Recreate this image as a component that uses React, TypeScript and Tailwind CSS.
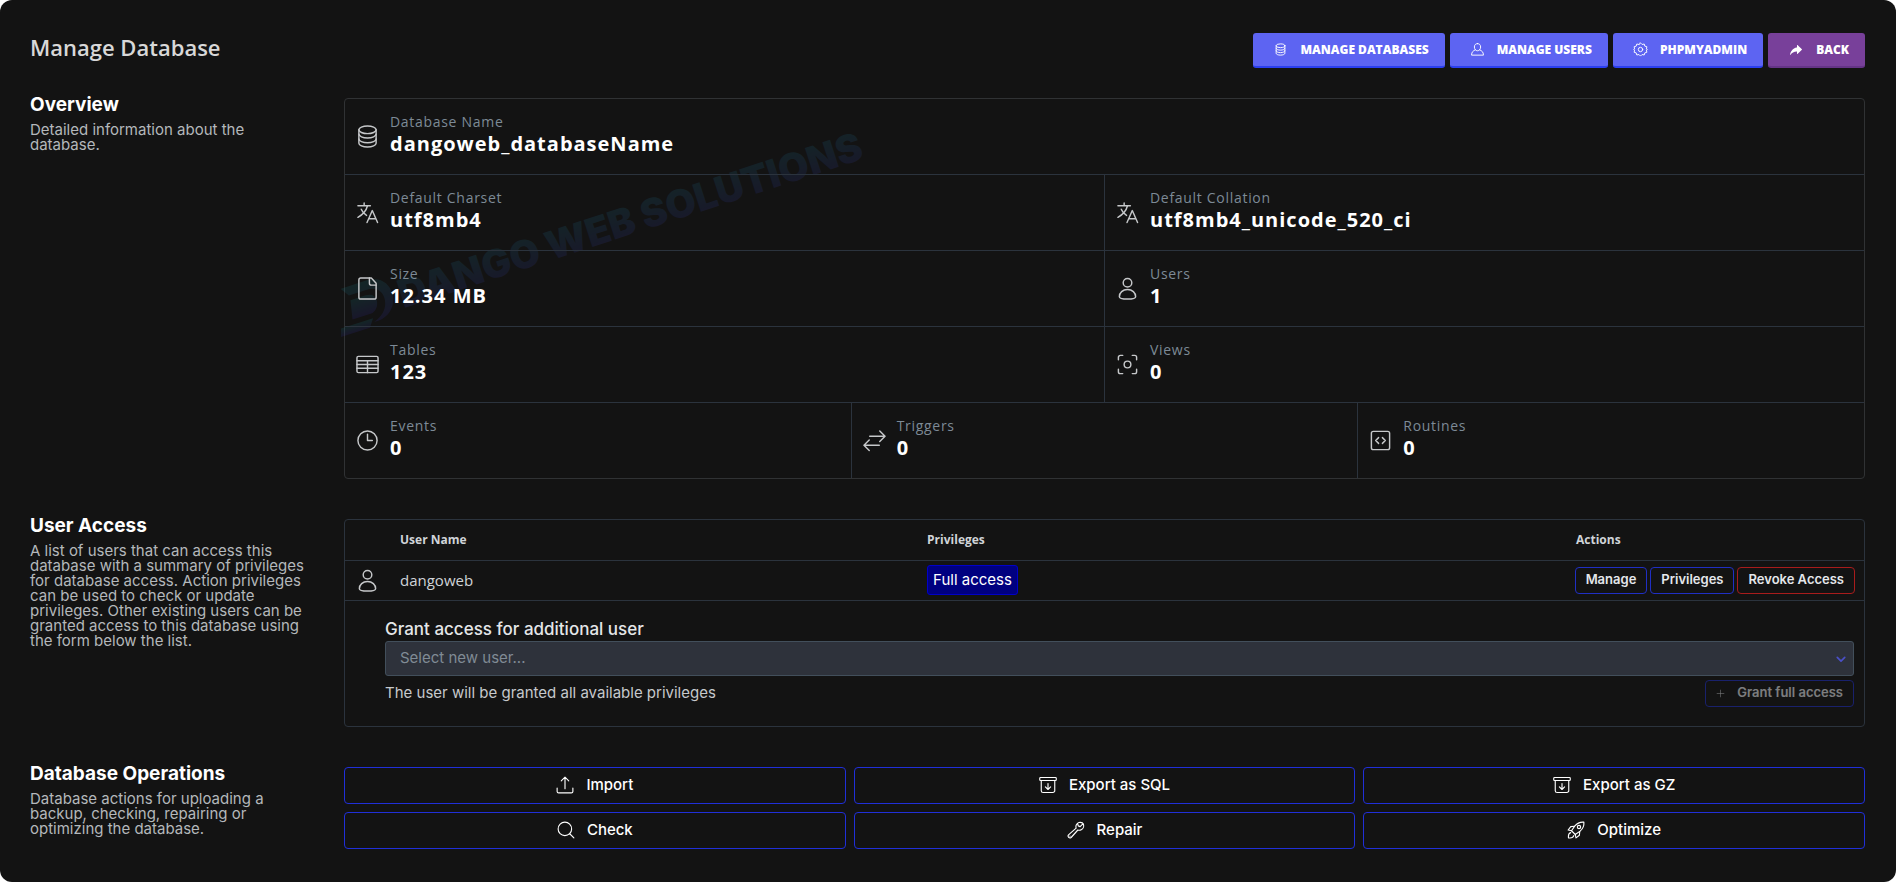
import type { ReactNode } from "react";
import { IoIosShareAlt } from "react-icons/io";

type IconProps = { children: ReactNode; className?: string };

function Icon({ children, className = "size-6" }: IconProps) {
  return (
    <svg
      viewBox="0 0 24 24"
      fill="none"
      stroke="currentColor"
      strokeWidth="1.5"
      strokeLinecap="round"
      strokeLinejoin="round"
      className={`shrink-0 ${className}`}
      aria-hidden="true"
    >
      {children}
    </svg>
  );
}

const icons = {
  database: (
    <>
      <ellipse cx="12" cy="5" rx="9" ry="4" />
      <path d="M3 5v14c0 2.2 4 4 9 4s9-1.8 9-4V5" />
      <path d="M3 9.500c0 2.200 4 4 9 4s9-1.800 9-4" />
      <path d="M3 14.500c0 2.200 4 4 9 4s9-1.800 9-4" />
    </>
  ),
  databaseSmall: (
    <>
      <ellipse cx="12" cy="6" rx="7" ry="3" />
      <path d="M5 6v12c0 1.700 3 3 7 3s7-1.300 7-3V6" />
      <path d="M5 10c0 1.700 3 3 7 3s7-1.300 7-3" />
      <path d="M5 14c0 1.700 3 3 7 3s7-1.300 7-3" />
    </>
  ),
  translate: (
    <>
      <path d="M2 5h13M8.500 2v3M12 5c-1 4-4.500 9-10 12M5.500 8.500c1 2.500 3 5 5.500 6.500" />
      <path d="M11.500 22.500 17 10l5.500 12.500M13.500 18.500h7" />
    </>
  ),
  file: (
    <>
      <path d="M5 1h11l5 5.500V21a2 2 0 0 1-2 2H5a2 2 0 0 1-2-2V3a2 2 0 0 1 2-2Z" />
      <path d="M14 1v5.500a2 2 0 0 0 2 2h5" />
    </>
  ),
  user: (
    <>
      <circle cx="12" cy="6" r="4.500" />
      <path d="M12 13c-5 0-8.500 3.500-8.500 7.500 0 1.500 4 2.500 8.500 2.500s8.500-1 8.500-2.500C20.500 16.500 17 13 12 13Z" />
    </>
  ),
  userSmall: (
    <>
      <path d="M12 2.500c-3 0-5 2.200-5 5.500s2 6 5 6 5-2.700 5-6-2-5.500-5-5.500Z" />
      <path d="M8.500 12.500C5 14 2.500 16 2.500 21h19c0-5-2.500-7-6-8.500" />
    </>
  ),
  table: (
    <>
      <rect x="1" y="3.500" width="22" height="17" rx="1.500" />
      <path d="M1 8h22M1 12h22M1 16h22M12 8v12.500" />
    </>
  ),
  views: (
    <>
      <circle cx="12" cy="12" r="3.500" />
      <path d="M2.500 7V4.500a2 2 0 0 1 2-2H7M17 2.500h2.500a2 2 0 0 1 2 2V7M21.500 17v2.500a2 2 0 0 1-2 2H17M7 21.500H4.500a2 2 0 0 1-2-2V17" />
    </>
  ),
  clock: (
    <>
      <circle cx="12" cy="12" r="10" />
      <path d="M12 5.500V12h5" />
    </>
  ),
  triggers: <path d="M7 7.500h15.500M17.500 2l5.500 5.500-5.500 5.500M17 17H1.500M6.500 11.500 1 17l5.500 5.500" />,
  routines: (
    <>
      <rect x="2.500" y="2.500" width="19" height="19" rx="2" />
      <path d="m10 9-3 3 3 3M14 9l3 3-3 3" />
    </>
  ),
  gear: (
    <>
      <circle cx="12" cy="12" r="3.500" />
      <path d="M12 1.500 14.500 4l3.400-.8 1 3.400 3.300 1-.8 3.400L23 12l-1.600 1 .8 3.400-3.300 1-1 3.400-3.400-.8-2.500 2.500L9.500 20l-3.400.8-1-3.400-3.300-1 .8-3.400L1 12l1.600-1-.8-3.400 3.300-1 1-3.400 3.400.8Z" />
    </>
  ),
  upload: <path d="M12 17V1.500M7 6.500l5-5 5 5M1.500 16v4.500a2 2 0 0 0 2 2h17a2 2 0 0 0 2-2V16" />,
  archive: (
    <>
      <rect x="1" y="2" width="22" height="4" rx="1" />
      <path d="M3 6v13.500a2.500 2.500 0 0 0 2.500 2.500h13a2.500 2.500 0 0 0 2.500-2.500V6M12 10v8M8.500 14.500 12 18l3.500-3.500" />
    </>
  ),
  search: (
    <>
      <circle cx="10.500" cy="10.500" r="9" />
      <path d="m17 17 5.500 5.500" />
    </>
  ),
  wrench: (
    <>
      <path d="M20.500 2.500c-3-1.500-6.500-.5-8 2.500-.8 1.600-.8 3-.3 4.500L2 18.500a2.500 2.500 0 0 0 3.500 3.500l9-10c1.500.5 3 .5 4.500-.3 3-1.500 4-5.200 2.500-8.200L17.500 7.500 15 6.500l-.5-2" />
      <path d="M4 20.200v.1" />
    </>
  ),
  rocket: (
    <>
      <path d="M22.500 1.500c-5-.5-9 1.500-12 5L6 13l5 5 6.500-4.500c3.500-3 5.500-7 5-12Z" />
      <circle cx="16" cy="8" r="2.200" />
      <path d="M10 7 5 7.500 1.500 12l4.500 1M17 14l-.5 5-4.500 3.500-1-4.500M5 15.500c-2 .5-3.500 3-3 7 4 .5 6.500-1 7-3" />
    </>
  ),
  plus: <path d="M12 3v18M3 12h18" />,
  chevron: <path d="m3 8 9 9 9-9" />,
};

type Stat = { label: string; value: string; icon: ReactNode };

const statRows: Stat[][] = [
  [{ label: "Database Name", value: "dangoweb_databaseName", icon: icons.database }],
  [
    { label: "Default Charset", value: "utf8mb4", icon: icons.translate },
    { label: "Default Collation", value: "utf8mb4_unicode_520_ci", icon: icons.translate },
  ],
  [
    { label: "Size", value: "12.34 MB", icon: icons.file },
    { label: "Users", value: "1", icon: icons.user },
  ],
  [
    { label: "Tables", value: "123", icon: icons.table },
    { label: "Views", value: "0", icon: icons.views },
  ],
  [
    { label: "Events", value: "0", icon: icons.clock },
    { label: "Triggers", value: "0", icon: icons.triggers },
    { label: "Routines", value: "0", icon: icons.routines },
  ],
];

const operations = [
  { label: "Import", icon: icons.upload },
  { label: "Export as SQL", icon: icons.archive },
  { label: "Export as GZ", icon: icons.archive },
  { label: "Check", icon: icons.search },
  { label: "Repair", icon: icons.wrench },
  { label: "Optimize", icon: icons.rocket },
];

const navLinks = [
  { label: "Manage Databases", icon: icons.databaseSmall },
  { label: "Manage Users", icon: icons.userSmall },
  { label: "phpMyAdmin", icon: icons.gear },
];

const navClass =
  "flex h-[35px] items-center gap-3 rounded-[3px] border-b-2 pr-4 pl-5 font-['Open_Sans',sans-serif] text-xs font-extrabold text-white uppercase";

const smallButton =
  "h-[27px] rounded-[4px] border px-[10px] text-[13px] font-semibold whitespace-nowrap text-gray-200";

function Section({ title, text, children }: { title: string; text: string; children: ReactNode }) {
  return (
    <section className="grid grid-cols-[284px_minmax(0,1fr)] gap-x-[30px]">
      <div>
        <h2 className="text-[19px] leading-[22px] font-bold text-white">{title}</h2>
        <p className="mt-[6px] text-[15px] leading-[15px] text-[#b4b8bb]">{text}</p>
      </div>
      <div className="pt-1">{children}</div>
    </section>
  );
}

function Watermark() {
  return (
    <svg
      viewBox="0 0 560 220"
      className="pointer-events-none absolute top-[20px] left-[-4px] h-[220px] w-[560px] opacity-15"
      aria-hidden="true"
    >
      <defs>
        <linearGradient id="wm" x1="0" y1="0" x2="0" y2="1">
          <stop offset="0" stopColor="#1c8f96" />
          <stop offset="1" stopColor="#3b2fb0" />
        </linearGradient>
      </defs>
      <g transform="rotate(-18 60 188)" fill="url(#wm)">
        <text x="62" y="190" className="font-['Inter',sans-serif] text-[39px] font-black">
          DANGO WEB SOLUTIONS
        </text>
        <path d="M8 152h26c16 0 22 10 22 20s-8 22-22 22h-4c12-4 17-12 17-20 0-9-6-13-15-13H14z" />
        <path d="M14 166h16c6 0 9 3 9 8s-4 11-10 11H10z" />
        <path d="M-4 190h34l-6 8H-8z" />
      </g>
    </svg>
  );
}

function Overview() {
  return (
    <div className="relative rounded-[4px] border border-[#303234]">
      <Watermark />
      <dl className="relative divide-y divide-[#2b333d]">
        {statRows.map((row, i) => (
          <div key={i} className="flex divide-x divide-[#2b333d]">
            {row.map((stat) => (
              <div key={stat.label} className="flex h-[75px] flex-1 items-center gap-[11px] pl-[11px] text-[#c6c8ca]">
                <Icon className="size-[23px]">{stat.icon}</Icon>
                <div className="pb-[6px] font-['Open_Sans',sans-serif]">
                  <dt className="text-sm leading-5 tracking-wider text-[#7d8a96]">{stat.label}</dt>
                  <dd className="text-[20px] leading-6 font-bold tracking-wider text-white">{stat.value}</dd>
                </div>
              </div>
            ))}
          </div>
        ))}
      </dl>
    </div>
  );
}

function UserAccess() {
  return (
    <div className="rounded-[4px] border border-[#2b333d]">
      <table className="w-full table-fixed text-left">
        <thead>
          <tr className="h-[40px] border-b border-[#2b333d] font-['Open_Sans',sans-serif] text-xs text-[#d0d4d8]">
            <th className="w-[45px]" aria-label="Type" />
            <th className="w-[34.7%] px-[10px] font-bold">User Name</th>
            <th className="px-[10px] font-bold">Privileges</th>
            <th className="w-[298px] px-[10px] font-bold">Actions</th>
          </tr>
        </thead>
        <tbody>
          <tr className="h-[40px] border-b border-[#2b333d]">
            <td className="pl-[11px] text-[#c6c8ca]">
              <Icon className="size-[23px]">{icons.user}</Icon>
            </td>
            <td className="px-[10px] font-['Open_Sans',sans-serif] text-[15px] text-[#d0d4d8]">dangoweb</td>
            <td className="px-[10px]">
              <span className="flex h-[30px] w-fit items-center rounded-[3px] border border-[#0000c8] bg-[#000080] px-[5px] text-[15px] text-white">
                Full access
              </span>
            </td>
            <td className="px-[9px]">
              <div className="flex justify-end gap-[3px]">
                <button type="button" className={`${smallButton} border-[#202fc4]`}>
                  Manage
                </button>
                <button type="button" className={`${smallButton} border-[#202fc4]`}>
                  Privileges
                </button>
                <button type="button" className={`${smallButton} border-[#a81c1c]`}>
                  Revoke Access
                </button>
              </div>
            </td>
          </tr>
        </tbody>
      </table>

      <form className="pt-4 pr-[10px] pb-[19px] pl-[40px]">
        <label htmlFor="new-user" className="block text-[17px] leading-6 font-medium text-[#e4e6e8]">
          Grant access for additional user
        </label>
        <div className="relative">
          <select
            id="new-user"
            defaultValue=""
            className="h-[35px] w-full appearance-none rounded-[3px] border border-[#424f5b] bg-[#2e323b] px-[14px] text-[15px] text-[#808b95]"
          >
            <option value="">Select new user...</option>
          </select>
          <Icon className="absolute top-[13px] right-[8px] size-[10px] stroke-[4] text-[#4a50c8]">{icons.chevron}</Icon>
        </div>
        <div className="mt-1 flex items-center justify-between">
          <p className="text-[15px] text-[#c6c9cc]">The user will be granted all available privileges</p>
          <button
            type="button"
            disabled
            className={`${smallButton} flex items-center gap-3 border-[#202fc4] opacity-50`}
          >
            <Icon className="size-[9px]">{icons.plus}</Icon>
            Grant full access
          </button>
        </div>
      </form>
    </div>
  );
}

export default function App() {
  return (
    <div className="bg-white">
      <main className="min-h-screen rounded-[12px] bg-[#131313] pt-[33px] pr-[31px] pb-8 pl-[30px] font-['Inter',sans-serif]">
        <header className="flex items-start justify-between">
          <h1 className="font-['Open_Sans',sans-serif] text-[22px] leading-7 font-semibold text-[#d8d8d8]">
            Manage Database
          </h1>
          <nav className="flex gap-[5px]">
            {navLinks.map((link) => (
              <a key={link.label} href="#" className={`${navClass} border-[#2b3ff0] bg-[#5d64f2]`}>
                <Icon className="size-[15px]">{link.icon}</Icon>
                {link.label}
              </a>
            ))}
            <a href="#" className={`${navClass} border-[#653487] bg-[#78409a]`}>
              <IoIosShareAlt className="size-4" aria-hidden="true" />
              Back
            </a>
          </nav>
        </header>

        <div className="mt-[26px] space-y-9">
          <Section title="Overview" text="Detailed information about the database.">
            <Overview />
          </Section>

          <Section
            title="User Access"
            text="A list of users that can access this database with a summary of privileges for database access. Action privileges can be used to check or update privileges. Other existing users can be granted access to this database using the form below the list."
          >
            <UserAccess />
          </Section>

          <Section
            title="Database Operations"
            text="Database actions for uploading a backup, checking, repairing or optimizing the database."
          >
            <div className="grid grid-cols-3 gap-2">
              {operations.map((op) => (
                <button
                  key={op.label}
                  type="button"
                  className="flex h-[37px] items-center justify-center gap-3 rounded-[4px] border border-[#202fd8] text-[15px] font-medium text-white"
                >
                  <Icon className="size-[18px]">{op.icon}</Icon>
                  {op.label}
                </button>
              ))}
            </div>
          </Section>
        </div>
      </main>
    </div>
  );
}
